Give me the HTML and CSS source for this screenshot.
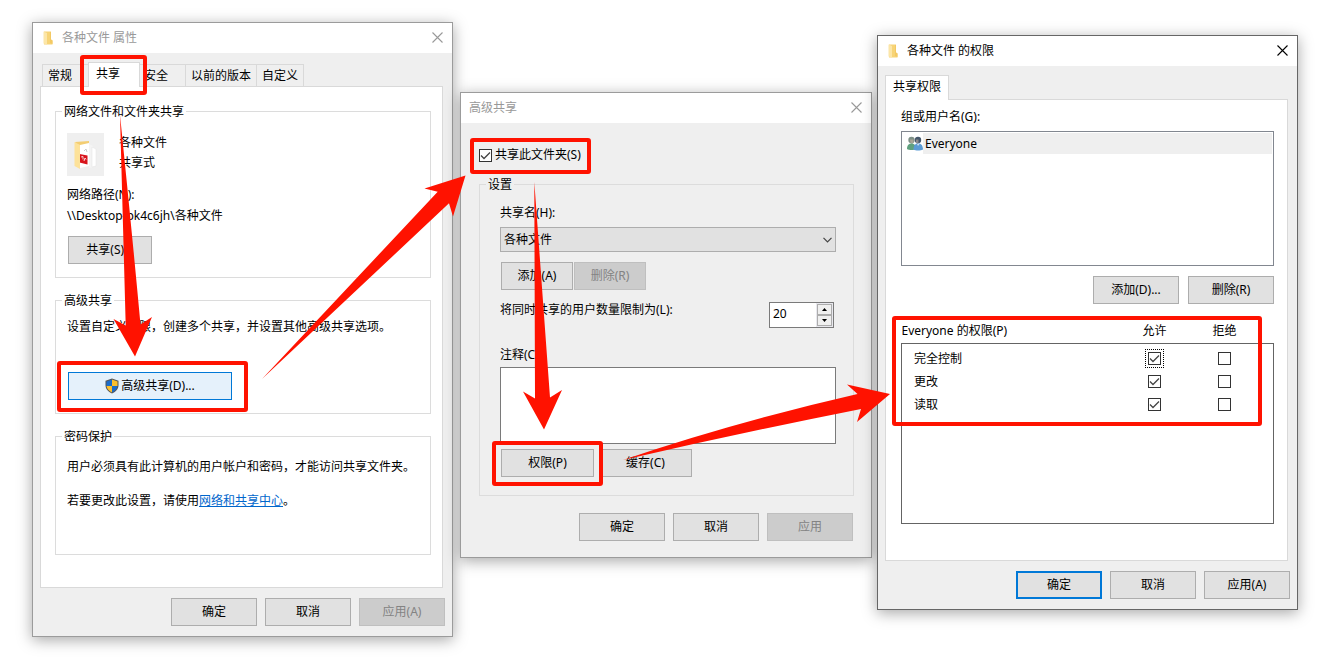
FILE: index.html
```html
<!DOCTYPE html>
<html lang="zh-CN">
<head>
    <meta charset="UTF-8">
    <meta name="viewport" content="width=device-width, initial-scale=1.0">
    <title>共享文件夹设置步骤</title>
    <link rel="stylesheet" href="styles.css">
</head>
<body>
    <svg class="defs" width="0" height="0" aria-hidden="true">
        <symbol id="icon-close" viewBox="0 0 11 11">
            <path d="M0.5 0.5l10 10M10.5 0.5l-10 10" fill="none" stroke="currentColor" stroke-width="1.1"/>
        </symbol>
        <symbol id="icon-folder" viewBox="0 0 10 14">
            <path d="M1 0.500h7v8l1.500 1v4H1z" fill="#f7d477"/>
            <path d="M0.500 0.500L4 2v11.500L0.500 12.500z" fill="#fce6a8"/>
            <path d="M7 1h1v7.500l1.500 1v3.500L7 12z" fill="#f3c964"/>
        </symbol>
    </svg>

    <main class="desktop">
        <section class="window window-props">
            <header class="titlebar">
                <svg class="title-icon"><use href="#icon-folder"/></svg>
                <h1 class="title">各种文件 属性</h1>
                <button class="close" aria-label="关闭"><svg><use href="#icon-close"/></svg></button>
            </header>
            <div class="window-body">
                <div class="tabs">
                    <button class="tab">常规</button>
                    <button class="tab tab-active">共享</button>
                    <button class="tab">安全</button>
                    <button class="tab">以前的版本</button>
                    <button class="tab">自定义</button>
                </div>
                <div class="panel">
                    <fieldset class="group">
                        <legend>网络文件和文件夹共享</legend>
                        <div class="share-item">
                            <div class="share-thumb">
                                <svg width="26" height="32" viewBox="0 0 26 32">
                                    <path d="M2 3l14-1v5H4z" fill="#f3cd72"/>
                                    <path d="M7 6l9-2v23l-9 2z" fill="#fff"/>
                                    <path d="M16 5l4 2v21l-4 1z" fill="#f4f4f4"/>
                                    <path d="M19 8l4 2v17l-4 1z" fill="#fff" stroke="#e2e2e2" stroke-width="0.500"/>
                                    <path d="M6.500 15l8 1.500v9l-8-2z" fill="#d8141c"/>
                                    <path d="M8 18l2-0.500v3M11 22l1-3 1 1.500" fill="none" stroke="#fff" stroke-width="0.800"/>
                                    <path d="M11 12l2-2 1 3" fill="none" stroke="#ccc"/>
                                    <path d="M1.500 3l5.500 3v24l-5.500-3z" fill="#fde29a"/>
                                </svg>
                            </div>
                            <div class="share-info">
                                <div>各种文件</div>
                                <div>共享式</div>
                            </div>
                        </div>
                        <p class="path-label">网络路径(N):</p>
                        <p class="path">\\Desktop-pk4c6jh\各种文件</p>
                        <button class="btn btn-share">共享(S)...</button>
                    </fieldset>
                    <fieldset class="group">
                        <legend>高级共享</legend>
                        <p class="advanced-text">设置自定义权限，创建多个共享，并设置其他高级共享选项。</p>
                        <button class="btn btn-advanced">
                            <svg width="14" height="16" viewBox="0 0 14 16">
                                <path d="M7 0.500l6.500 2.300V7c0 4-2.500 6.600-6.500 8.500C3 13.600 0.500 11 0.500 7V2.800z" fill="#555"/>
                                <path d="M7 1.500V8H1.500V3.500z" fill="#1c6cc9"/>
                                <path d="M7 1.500V8h5.500V3.500z" fill="#fbbf2d"/>
                                <path d="M7 8v6.400C3.800 12.800 1.900 10.900 1.500 8z" fill="#fbbf2d"/>
                                <path d="M7 8v6.400c3.200-1.600 5.100-3.500 5.500-6.400z" fill="#1c6cc9"/>
                            </svg>
                            高级共享(D)...
                        </button>
                    </fieldset>
                    <fieldset class="group group-password">
                        <legend>密码保护</legend>
                        <p class="password-text">用户必须具有此计算机的用户帐户和密码，才能访问共享文件夹。</p>
                        <p class="password-link">若要更改此设置，请使用<a href="#">网络和共享中心</a>。</p>
                    </fieldset>
                </div>
                <footer class="actions">
                    <button class="btn">确定</button>
                    <button class="btn">取消</button>
                    <button class="btn" disabled>应用(A)</button>
                </footer>
            </div>
        </section>

        <section class="window window-advanced">
            <header class="titlebar">
                <h1 class="title">高级共享</h1>
                <button class="close" aria-label="关闭"><svg><use href="#icon-close"/></svg></button>
            </header>
            <div class="window-body">
                <label class="check-row"><input type="checkbox" checked>共享此文件夹(S)</label>
                <fieldset class="group">
                    <legend>设置</legend>
                    <label class="share-name-label" for="share-name">共享名(H):</label>
                    <div class="select-wrap">
                        <select id="share-name">
                            <option>各种文件</option>
                        </select>
                        <svg class="chevron" width="9" height="6" viewBox="0 0 9 6">
                            <path d="M0.500 0.800l4 4 4-4" fill="none" stroke="#444" stroke-width="1.200"/>
                        </svg>
                    </div>
                    <div class="name-buttons">
                        <button class="btn">添加(A)</button>
                        <button class="btn" disabled>删除(R)</button>
                    </div>
                    <div class="limit-row">
                        <label for="limit">将同时共享的用户数量限制为(L):</label>
                        <div class="spinner">
                            <input type="text" id="limit" value="20">
                            <div class="spin-buttons">
                                <button aria-label="增加"><svg width="5" height="3" viewBox="0 0 5 3"><path d="M0 3l2.500-3L5 3z"/></svg></button>
                                <button aria-label="减少"><svg width="5" height="3" viewBox="0 0 5 3"><path d="M0 0l2.500 3L5 0z"/></svg></button>
                            </div>
                        </div>
                    </div>
                    <label class="comment-label" for="comment">注释(C):</label>
                    <textarea id="comment"></textarea>
                    <div class="comment-buttons">
                        <button class="btn">权限(P)</button>
                        <button class="btn">缓存(C)</button>
                    </div>
                </fieldset>
                <footer class="actions">
                    <button class="btn">确定</button>
                    <button class="btn">取消</button>
                    <button class="btn" disabled>应用</button>
                </footer>
            </div>
        </section>

        <section class="window window-perms">
            <header class="titlebar">
                <svg class="title-icon"><use href="#icon-folder"/></svg>
                <h1 class="title">各种文件 的权限</h1>
                <button class="close" aria-label="关闭"><svg><use href="#icon-close"/></svg></button>
            </header>
            <div class="window-body">
                <div class="tabs">
                    <button class="tab tab-active">共享权限</button>
                </div>
                <div class="panel">
                    <p class="users-label">组或用户名(G):</p>
                    <ul class="user-list">
                        <li>
                            <svg width="16" height="16" viewBox="0 0 16 16">
                                <circle cx="4.500" cy="4" r="3.200" fill="#7d8f86"/>
                                <path d="M3 3.500h3.500v3L5 8 3.500 7z" fill="#a9a596"/>
                                <path d="M0 13c0-4 2-5.500 4.500-5.500S9 9 9 13c-2 1.300-7 1.300-9 0z" fill="#5fa07e"/>
                                <circle cx="11" cy="4" r="3.200" fill="#43566b"/>
                                <path d="M9 3.500h2.500v3.200L10.500 8 9 7z" fill="#8d8a8c"/>
                                <path d="M6.500 13.500c0-4.500 2-6 4.700-6s4.600 1.500 4.800 6c-2.500 1.300-7.500 1.300-9.500 0z" fill="#5b9bd5"/>
                                <path d="M10 8l1 2 1.500-2z" fill="#cfe2f4"/>
                            </svg>
                            <span>Everyone</span>
                        </li>
                    </ul>
                    <div class="user-buttons">
                        <button class="btn">添加(D)...</button>
                        <button class="btn">删除(R)</button>
                    </div>
                    <table class="perm-table">
                        <thead>
                            <tr>
                                <th>Everyone 的权限(P)</th>
                                <th class="col-allow">允许</th>
                                <th class="col-deny">拒绝</th>
                            </tr>
                        </thead>
                        <tbody>
                            <tr>
                                <td>完全控制</td>
                                <td><input class="focused" type="checkbox" aria-label="完全控制 允许" checked></td>
                                <td><input type="checkbox" aria-label="完全控制 拒绝"></td>
                            </tr>
                            <tr>
                                <td>更改</td>
                                <td><input type="checkbox" aria-label="更改 允许" checked></td>
                                <td><input type="checkbox" aria-label="更改 拒绝"></td>
                            </tr>
                            <tr>
                                <td>读取</td>
                                <td><input type="checkbox" aria-label="读取 允许" checked></td>
                                <td><input type="checkbox" aria-label="读取 拒绝"></td>
                            </tr>
                        </tbody>
                    </table>
                </div>
                <footer class="actions">
                    <button class="btn btn-default">确定</button>
                    <button class="btn">取消</button>
                    <button class="btn">应用(A)</button>
                </footer>
            </div>
        </section>

        <!-- red boxes and arrows over the windows -->
        <svg class="marks" width="1332" height="663" viewBox="0 0 1332 663" aria-hidden="true">
            <g fill="none" stroke="#ff1200" stroke-width="4">
                <rect x="82" y="57" width="63" height="36" rx="1"/>
                <rect x="59" y="363" width="187" height="47" rx="1"/>
                <rect x="472" y="140" width="117" height="32" rx="1"/>
                <rect x="494" y="443" width="107" height="41" rx="1"/>
                <rect x="894" y="318" width="366" height="106" rx="1"/>
            </g>
            <g fill="#ff1200">
                <path d="M120 115L125.700 325.500L113.500 319L135 356.500L152 317L140.500 324.500Q131 222 120 115z"/>
                <path d="M262 379L437.700 191.700L424.500 188.500L465.500 175.500L453 216.500L449 203.300z"/>
                <path d="M534.300 182L535 398.500L523 391.500L544 429.500L562 390L550 397.500z"/>
                <path d="M623 460Q735 422 857.500 394L847 384.500L890 394L857 422L861 409Q740 433 623 460z"/>
            </g>
        </svg>
    </main>
</body>
</html>
```
FILE: styles.css
```css
* {
    box-sizing: border-box;
}
body {
    margin: 0;
    background-color: #fff;
    color: #000;
    font-family: "Noto Sans", "Noto Sans CJK SC", sans-serif;
    font-size: 12px;
    line-height: 16px;
}
button, input, select, textarea {
    font: inherit;
    color: inherit;
    margin: 0;
}
p {
    margin: 0;
}
.defs {
    position: absolute;
}
.desktop {
    position: relative;
    min-height: 100vh;
    overflow: hidden;
}
.marks {
    position: absolute;
    left: 0;
    top: 0;
    pointer-events: none;
}

/* windows */
.window {
    position: absolute;
    border: 1px solid #9b9b9b;
    background-color: #efefef;
    box-shadow: 0 3px 14px rgba(0, 0, 0, 0.35);
}
.window-props {
    left: 32px;
    top: 22px;
    width: 421px;
}
.window-advanced {
    left: 460px;
    top: 92px;
    width: 412px;
}
.window-perms {
    left: 877px;
    top: 35px;
    width: 421px;
    border-color: #666;
}
.titlebar {
    display: flex;
    align-items: center;
    height: 30px;
    padding: 0 9px 0 10px;
    background-color: #fff;
    color: #999;
}
.window-advanced .titlebar {
    padding-left: 8px;
}
.window-perms .titlebar {
    color: #000;
}
.title-icon {
    width: 10px;
    height: 14px;
    margin-right: 9px;
}
.title {
    flex: 1;
    margin: 0;
    font-size: 12px;
    font-weight: normal;
}
.close {
    display: flex;
    padding: 0 0 2px;
    border: none;
    background: none;
}
.close svg {
    width: 11px;
    height: 11px;
}

/* tabs */
.window-props .window-body,
.window-perms .window-body {
    padding: 9px 7px 10px;
}
.tabs {
    display: flex;
    align-items: flex-end;
    padding-left: 2px;
}
.window-perms .tabs {
    padding-left: 0;
}
.tab {
    height: 22px;
    padding: 0 5px;
    border: 1px solid #d9d9d9;
    border-bottom: none;
    background-color: #efefef;
    text-align: left;
}
.tab + .tab {
    margin-left: -1px;
}
.window-props .tab {
    min-width: 47px;
}
.tab-active {
    z-index: 1;
    height: 25px;
    margin-bottom: -1px;
    padding: 0 7px 2px;
    background-color: #fff;
}
.window-props .tab-active {
    min-width: 52px;
}
.window-props .tab-active + .tab {
    padding-left: 4px;
}
.panel {
    margin-right: 2px;
    border: 1px solid #d9d9d9;
    background-color: #fff;
}
.window-props .panel {
    padding: 15px 11px 32px 14px;
}
.window-perms .panel {
    padding: 9px 13px 36px 15px;
}

/* group boxes */
.group {
    min-width: 0;
    margin: 0;
    padding: 0 11px 13px;
    border: 1px solid #dcdcdc;
}
.group + .group {
    margin-top: 13px;
}
legend {
    margin-left: -5px;
    padding: 2px 2px 0;
}
.share-item {
    display: flex;
    gap: 15px;
    padding-top: 13px;
}
.share-thumb {
    display: flex;
    align-items: center;
    justify-content: center;
    width: 37px;
    height: 43px;
    background-color: #efefef;
}
.share-info {
    line-height: 20px;
}
.path-label {
    margin-top: 11px;
}
.path {
    margin-top: 5px;
}
.advanced-text {
    margin-top: 10px;
}
.group-password {
    padding-bottom: 45px;
}
.password-text {
    margin-top: 14px;
}
.password-link {
    margin-top: 18px;
}
a {
    color: #0066cc;
}

/* buttons */
.btn {
    display: flex;
    align-items: center;
    justify-content: center;
    width: 86px;
    height: 28px;
    padding: 0;
    border: 1px solid #adadad;
    background-color: #e1e1e1;
}
.btn:disabled {
    border-color: #bfbfbf;
    background-color: #ccc;
    color: #838383;
}
.btn-default {
    border: 2px solid #0078d7;
}
.btn-share {
    width: 84px;
    margin: 12px 0 0 1px;
}
.btn-advanced {
    gap: 2px;
    width: 164px;
    margin: 37px 0 0 1px;
    border-color: #0078d7;
    background-color: #e5f1fb;
}
.actions {
    display: flex;
    justify-content: flex-end;
    gap: 8px;
    margin-top: 10px;
}

/* checkboxes */
input[type="checkbox"] {
    appearance: none;
    width: 13px;
    height: 13px;
    border: 1px solid #333;
    background-color: #fff;
}
input[type="checkbox"]:checked {
    background-image: url("data:image/svg+xml,%3Csvg xmlns='http://www.w3.org/2000/svg' viewBox='0 0 11 11'%3E%3Cpath d='M1 5.500l3 3 6-6' fill='none' stroke='%23444' stroke-width='1.300'/%3E%3C/svg%3E");
}
.focused {
    outline: 1px dotted #000;
    outline-offset: 2px;
}

/* advanced sharing */
.window-advanced .window-body {
    padding: 24px 17px 16px 18px;
}
.check-row {
    display: flex;
    align-items: center;
    gap: 3px;
}
.window-advanced .group {
    margin-top: 12px;
    padding: 0 17px 18px 20px;
}
.window-advanced legend {
    margin-left: -14px;
}
.share-name-label {
    display: block;
    margin-top: 12px;
}
.select-wrap {
    position: relative;
    margin-top: 6px;
}
select {
    display: block;
    appearance: none;
    width: 100%;
    height: 25px;
    padding: 0 20px 0 3px;
    border: 1px solid #adadad;
    border-radius: 0;
    background-color: #e1e1e1;
}
.chevron {
    position: absolute;
    right: 4px;
    top: 10px;
}
.name-buttons {
    display: flex;
    gap: 1px;
    margin: 10px 0 0 1px;
}
.name-buttons .btn {
    width: 72px;
}
.limit-row {
    display: flex;
    align-items: flex-start;
    justify-content: space-between;
    margin: 12px 2px 0 0;
}
.spinner {
    display: flex;
    width: 65px;
    height: 26px;
    border: 1px solid #7a7a7a;
    background-color: #fff;
}
.spinner input {
    flex: 1;
    min-width: 0;
    padding: 0 3px 2px;
    border: none;
    background: none;
}
.spin-buttons {
    display: flex;
    flex-direction: column;
    width: 17px;
    padding: 1px;
    background-color: #e8e8ee;
}
.spin-buttons button {
    display: flex;
    flex: 1;
    align-items: center;
    justify-content: center;
    padding: 0;
    border: 1px solid #adadad;
    background-color: #f0f0f0;
}
.comment-label {
    display: block;
    margin-top: 19px;
}
textarea {
    display: block;
    width: 100%;
    height: 77px;
    margin-top: 4px;
    border: 1px solid #7a7a7a;
    border-radius: 0;
    background-color: #fff;
    resize: none;
}
.comment-buttons {
    display: flex;
    gap: 5px;
    margin: 5px 0 0 1px;
}
.comment-buttons .btn {
    width: 93px;
}
.window-advanced .actions {
    margin-top: 17px;
    padding-right: 1px;
}

/* permissions */
.user-list {
    height: 135px;
    margin: 6px 0 0;
    padding: 1px;
    border: 1px solid #828790;
    list-style: none;
}
.user-list li {
    display: flex;
    align-items: center;
    padding-left: 4px;
}
.user-list span {
    flex: 1;
    padding: 3px 2px 2px;
    background-color: #efefef;
}
.user-buttons {
    display: flex;
    justify-content: flex-end;
    gap: 9px;
    margin-top: 10px;
}
.perm-table {
    width: 100%;
    margin-top: 19px;
    border-collapse: collapse;
}
.perm-table tbody {
    border: 1px solid #646464;
}
.perm-table th {
    padding: 0 0 4px;
    font-weight: normal;
    text-align: left;
}
.perm-table th.col-allow {
    width: 42px;
    text-align: center;
}
.perm-table th.col-deny {
    width: 98px;
    text-align: center;
}
.perm-table td {
    height: 23px;
    padding: 4px 0 3px;
    text-align: center;
    vertical-align: top;
}
.perm-table td:first-child {
    padding-left: 12px;
    text-align: left;
}
.perm-table td input {
    display: block;
    margin: 1px auto 0;
}
.perm-table tr:first-child td {
    height: 26px;
    padding-top: 7px;
}
.perm-table tr:last-child td {
    height: 130px;
}
```
